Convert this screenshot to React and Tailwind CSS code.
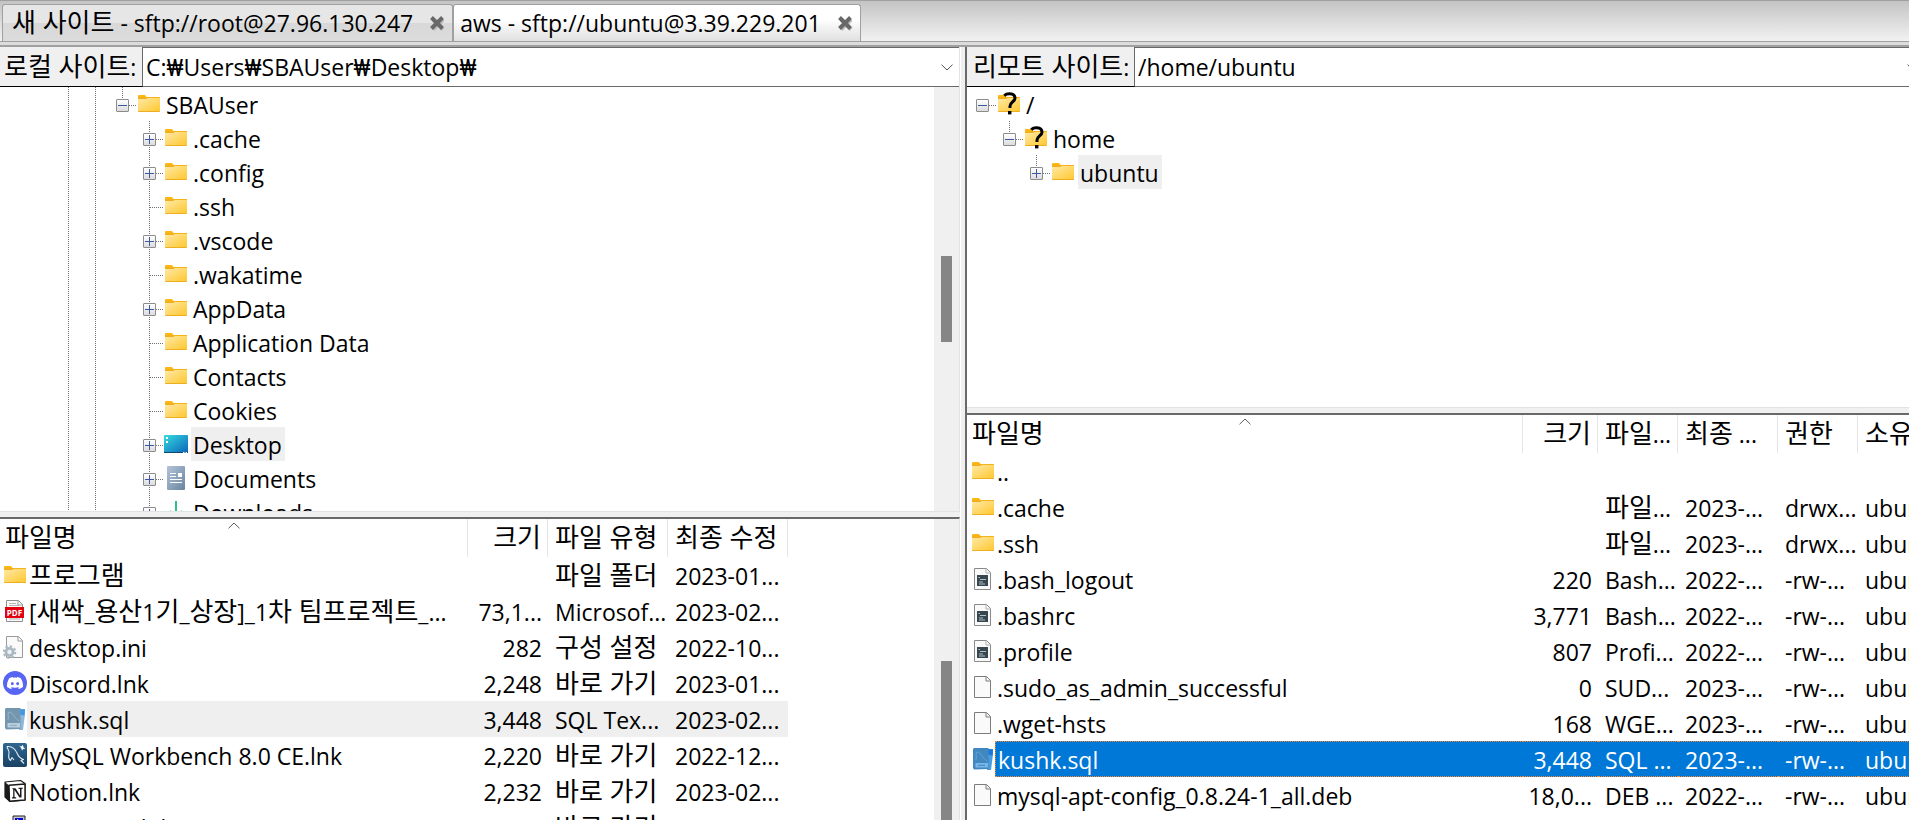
import { Fragment } from "react";
import { SiDiscord } from "react-icons/si";

const HANGUL = /([\uac00-\ud7a3]+(?: [\uac00-\ud7a3]+)*)/;

/* Hangul runs are set slightly larger than the Latin text beside them. */
function Txt({ children }) {
  return String(children)
    .split(HANGUL)
    .map((part, i) =>
      i % 2 ? (
        <span key={i} className="text-[26px] leading-none">
          {part}
        </span>
      ) : (
        <Fragment key={i}>{part}</Fragment>
      )
    );
}

function Svg({ children }) {
  return (
    <svg viewBox="0 0 24 24" className="size-6 shrink-0" aria-hidden="true">
      {children}
    </svg>
  );
}

const FolderShape = () => (
  <>
    <path d="M1 4a1 1 0 0 1 1-1h6l1.500 2H23v3H1z" fill="#fdb713" />
    <rect x="1" y="5.500" width="22" height="14.500" rx="0.800" fill="#eeae22" />
    <path d="M1 7h8l2-1h12v13H1z" fill="url(#folder)" />
  </>
);

const Folder = () => (
  <Svg>
    <FolderShape />
  </Svg>
);

const UnknownFolder = () => (
  <span className="relative block size-6">
    <Folder />
    <svg viewBox="0 0 24 24" className="absolute inset-0 size-6" aria-hidden="true">
      <path d="M7.200 3.600C9 2 11 1.700 13 1.800C16 2 18 3.500 18 6.300C18 9.500 13 10.500 13 14V16" fill="none" stroke="#000" strokeWidth="3" />
      <rect x="11" y="19" width="3.400" height="3.400" fill="#000" />
    </svg>
  </span>
);

const DesktopIcon = () => (
  <Svg>
    <rect x="0" y="3" width="24" height="18" rx="0.800" fill="url(#desk)" />
    <rect x="0" y="20" width="24" height="1" fill="#11466f" />
    <rect x="2" y="5" width="2" height="2" fill="#fff" />
    <rect x="2" y="9" width="2" height="2" fill="#fff" />
    <path d="M19 20.500h1.500M21.500 20.500h1.500" stroke="#fff" />
  </Svg>
);

const DocumentsIcon = () => (
  <Svg>
    <rect x="3" y="0" width="18" height="24" rx="1" fill="url(#docs)" />
    <path d="M6 7.500h6M6 10.500h6M6 13.500h12M6 16.500h12" stroke="#fff" strokeWidth="1.200" />
    <rect x="14" y="7" width="4" height="4" fill="#fff" />
  </Svg>
);

const DownloadsIcon = () => (
  <Svg>
    <path d="M12 1v15M6 11l6 6 6-6M4 22h16" fill="none" stroke="#2cc08d" strokeWidth="2" />
  </Svg>
);

const FileIcon = () => (
  <Svg>
    <path d="M3.500 1.500h12l4 4v17h-16z" fill="#fafafa" stroke="#7d7d7d" />
    <path d="M15 1.500V6h4.500" fill="none" stroke="#7d7d7d" />
  </Svg>
);

const ShellIcon = () => (
  <Svg>
    <path d="M3.500 1.500h12l4 4v17h-16z" fill="#fafafa" stroke="#8a8a8a" />
    <path d="M15 1.500V6h4.500" fill="none" stroke="#b0b0b0" />
    <rect x="6" y="8" width="11" height="11" fill="#37474f" />
    <path d="M7.500 10.500h1.500M9 12.500h6M8 15h4M8 17h6" stroke="#b4bec4" />
  </Svg>
);

const PdfIcon = () => (
  <Svg>
    <path d="M3.500 1.500h12l4 4v17h-16z" fill="#fafafa" stroke="#8f8f8f" />
    <path d="M6 4.500h7M6 6.500h10M6 20h11" stroke="#b5b5b5" />
    <path d="M15 1.500V6h4.500" fill="none" stroke="#a0a0a0" />
    <rect x="2" y="8" width="19" height="11" fill="#e3000f" />
    <text x="11.500" y="16.500" textAnchor="middle" fontSize="8" fontWeight="700" fill="#fff" fontFamily="Open Sans, sans-serif">
      PDF
    </text>
  </Svg>
);

const IniIcon = () => (
  <Svg>
    <path d="M3.500 1.500h12l4 4v17h-16z" fill="#fafafa" stroke="#9a9a9a" />
    <path d="M15 1.500V6h4.500" fill="none" stroke="#9a9a9a" />
    <circle cx="6.500" cy="17" r="5.800" fill="none" stroke="#a9b7c0" strokeWidth="2" strokeDasharray="2.300 2.200" />
    <circle cx="6.500" cy="17" r="3.700" fill="#dce4e8" stroke="#a9b7c0" strokeWidth="2.600" />
    <circle cx="6.500" cy="17" r="1.700" fill="#eef2f4" />
  </Svg>
);

const DiscordIcon = () => (
  <span className="flex size-6 items-center justify-center rounded-full bg-[#5865f2] text-white">
    <SiDiscord className="size-4" aria-hidden="true" />
  </span>
);

const Dolphin = ({ stroke }) => (
  <path
    d="M4 3.500C9 3 12.500 6 14.500 11C15.500 14 18 15.500 20.500 16.500L18 17.500L21 20.500M4 3.500C4 6 6.500 7 6 10C5.500 12.500 5.500 16 7.500 17.500L9 14.500L11 17"
    fill="none"
    stroke={stroke}
    strokeWidth="1.100"
    strokeLinejoin="round"
  />
);

const SqlIcon = ({ selected }) => (
  <Svg>
    <path d="M17 2h5v5l-2 16h-4z" fill={selected ? "#4b9be0" : "#8fb8d8"} />
    <path d="M16 2l6 0.500-0.500 6-5-1z" fill={selected ? "#1a78dc" : "#3f97ea"} />
    <path d="M3 1h14.500v21L3 22.500 2 21V2z" fill={selected ? "#4288c0" : "#7496ae"} />
    <path d="M5 13c1-4-1-7 1-8 4 0 5 6 10 9" fill="none" stroke={selected ? "#69a6d6" : "#9db8ca"} strokeWidth="0.900" />
    <rect x="4.500" y="16" width="12.500" height="4.500" fill={selected ? "#78b6e8" : "#b7cfdf"} />
    <path d="M7 18.300h7" stroke={selected ? "#4288c0" : "#8ea9bb"} />
  </Svg>
);

const WorkbenchIcon = () => (
  <Svg>
    <rect width="24" height="24" rx="2" fill="url(#wb)" />
    <Dolphin stroke="#dfeaf2" />
    <path d="M16 2.500l2 1 2-1.500 0.500 2.500 2 1-2.300 0.500-1.200 1.500-0.800-2.500z" fill="#fff" />
  </Svg>
);

const NotionIcon = () => (
  <Svg>
    <path d="M2 3L17.500 1.500 22 4.500V21L7 22.500 2 18z" fill="#fff" stroke="#1a1a1a" strokeWidth="1.200" strokeLinejoin="round" />
    <path d="M2 3L6 6.500V22L2 18z" fill="#1a1a1a" />
    <path d="M6 6.300L22 5v16L6.500 22.200z" fill="#fff" stroke="#1a1a1a" strokeWidth="1.400" strokeLinejoin="round" />
    <path d="M9 9.200h3.500l4.500 7V10l-1.500-0.300V8.700h4.200v1l-1.200 0.400V18.500h-2l-5-7.500v7l1.700 0.400v1H9v-1l1.200-0.400V10.500z" fill="#1a1a1a" />
  </Svg>
);

const PuttyIcon = () => (
  <Svg>
    <path d="M10 1h12v11H10z" fill="#c8c8c8" stroke="#222" />
    <rect x="12" y="3" width="8" height="7" fill="#0000e0" />
    <path d="M15 4l-3 5h3l-3 5" fill="none" stroke="#ff0" />
    <path d="M2 12h12v8H2z" fill="#c8c8c8" stroke="#222" />
  </Svg>
);

const ICONS = {
  folder: Folder,
  unknown: UnknownFolder,
  desktop: DesktopIcon,
  documents: DocumentsIcon,
  downloads: DownloadsIcon,
  file: FileIcon,
  shell: ShellIcon,
  pdf: PdfIcon,
  ini: IniIcon,
  discord: DiscordIcon,
  sql: SqlIcon,
  workbench: WorkbenchIcon,
  notion: NotionIcon,
  putty: PuttyIcon,
};

function Defs() {
  return (
    <svg className="absolute size-0" aria-hidden="true">
      <defs>
        <linearGradient id="folder" x1="0" y1="0" x2="1" y2="1">
          <stop offset="0" stopColor="#ffe9a6" />
          <stop offset="1" stopColor="#ffc831" />
        </linearGradient>
        <linearGradient id="desk" x1="0" y1="0" x2="1" y2="1">
          <stop offset="0" stopColor="#36dbe2" />
          <stop offset="1" stopColor="#0a63b8" />
        </linearGradient>
        <linearGradient id="docs" x1="0" y1="0" x2="1" y2="1">
          <stop offset="0" stopColor="#b3c4d8" />
          <stop offset="1" stopColor="#6a84a0" />
        </linearGradient>
        <linearGradient id="wb" x1="0" y1="0" x2="0" y2="1">
          <stop offset="0" stopColor="#2f6690" />
          <stop offset="1" stopColor="#1a4263" />
        </linearGradient>
      </defs>
    </svg>
  );
}

const V_DOTS = "w-px bg-[repeating-linear-gradient(to_bottom,#707070_0_1px,transparent_1px_2px)]";
const H_DOTS = "h-px bg-[repeating-linear-gradient(to_right,#707070_0_1px,transparent_1px_2px)]";

/* One indent column of the tree: the guide line, and the expander if this row has one. */
function Guide({ up = true, down = true, kind }) {
  return (
    <span className="grid h-[34px] w-[27px] shrink-0 grid-cols-[13px_1px_13px] grid-rows-[18px_16px]">
      <span className={`col-start-2 row-start-1 ${up ? V_DOTS : ""}`} />
      <span className={`col-start-2 row-start-2 ${down ? V_DOTS : ""}`} />
      {kind && <span className={`col-start-3 row-start-2 ${H_DOTS}`} />}
      {(kind === "plus" || kind === "minus") && (
        <button
          type="button"
          aria-label={kind === "plus" ? "펼치기" : "접기"}
          className="z-10 col-span-3 col-start-1 row-span-2 row-start-1 mt-3 size-[13px] justify-self-center rounded-[1px] border border-[#8c8c8c] bg-linear-to-b from-white to-[#dcdcdc]"
        >
          <svg viewBox="0 0 11 11" className="block size-[11px]" aria-hidden="true">
            <path d={kind === "plus" ? "M1 5.500h9M5.500 1v9" : "M1 5.500h9"} stroke="#3f56a0" />
          </svg>
        </button>
      )}
    </span>
  );
}

function TreeRow({ guides, icon, label, selected }) {
  const Icon = ICONS[icon];
  return (
    <li className="flex h-[34px]" role="treeitem" aria-selected={!!selected}>
      {guides.map((g, i) => (
        <Guide key={i} {...g} />
      ))}
      <span className="w-7 shrink-0 pt-[5px] pl-px">
        <Icon />
      </span>
      <span className={`pt-px pr-[3px] pl-[2px] leading-[34px] whitespace-nowrap ${selected ? "bg-[#efefef]" : ""}`}>{label}</span>
    </li>
  );
}

const LINE = {};
const NONE = { up: false, down: false };
const child = (icon, label, kind, selected) => ({
  icon,
  label,
  selected,
  guides: [LINE, LINE, NONE, { kind }],
});

const LOCAL_TREE = [
  { icon: "folder", label: "SBAUser", guides: [LINE, LINE, { kind: "minus", down: false }] },
  child("folder", ".cache", "plus"),
  child("folder", ".config", "plus"),
  child("folder", ".ssh", "leaf"),
  child("folder", ".vscode", "plus"),
  child("folder", ".wakatime", "leaf"),
  child("folder", "AppData", "plus"),
  child("folder", "Application Data", "leaf"),
  child("folder", "Contacts", "leaf"),
  child("folder", "Cookies", "leaf"),
  child("desktop", "Desktop", "plus", true),
  child("documents", "Documents", "plus"),
  child("downloads", "Downloads", "plus"),
];

const REMOTE_TREE = [
  { icon: "unknown", label: "/", guides: [{ kind: "minus", up: false, down: false }] },
  { icon: "unknown", label: "home", guides: [NONE, { kind: "minus", down: false }] },
  { icon: "folder", label: "ubuntu", selected: true, guides: [NONE, NONE, { kind: "plus", down: false }] },
];

const LOCAL_FILES = [
  ["folder", "프로그램", "", "파일 폴더", "2023-01..."],
  ["pdf", "[새싹_용산1기_상장]_1차 팀프로젝트_...", "73,1...", "Microsof...", "2023-02..."],
  ["ini", "desktop.ini", "282", "구성 설정", "2022-10..."],
  ["discord", "Discord.lnk", "2,248", "바로 가기", "2023-01..."],
  ["sql", "kushk.sql", "3,448", "SQL Tex...", "2023-02...", "gray"],
  ["workbench", "MySQL Workbench 8.0 CE.lnk", "2,220", "바로 가기", "2022-12..."],
  ["notion", "Notion.lnk", "2,232", "바로 가기", "2023-02..."],
  ["putty", "PuTTYgen.lnk", "1,168", "바로 가기", "2023-02..."],
];

const REMOTE_FILES = [
  ["folder", "..", "", "", "", "", ""],
  ["folder", ".cache", "", "파일...", "2023-...", "drwx...", "ubuntu"],
  ["folder", ".ssh", "", "파일...", "2023-...", "drwx...", "ubuntu"],
  ["shell", ".bash_logout", "220", "Bash...", "2022-...", "-rw-...", "ubuntu"],
  ["shell", ".bashrc", "3,771", "Bash...", "2022-...", "-rw-...", "ubuntu"],
  ["shell", ".profile", "807", "Profi...", "2022-...", "-rw-...", "ubuntu"],
  ["file", ".sudo_as_admin_successful", "0", "SUD...", "2023-...", "-rw-...", "ubuntu"],
  ["file", ".wget-hsts", "168", "WGE...", "2023-...", "-rw-...", "ubuntu"],
  ["sql", "kushk.sql", "3,448", "SQL ...", "2023-...", "-rw-...", "ubuntu", "blue"],
  ["file", "mysql-apt-config_0.8.24-1_all.deb", "18,0...", "DEB ...", "2022-...", "-rw-...", "ubuntu"],
];

const TONES = {
  gray: { cell: "bg-[#efefef]", name: "bg-[#efefef]" },
  blue: {
    cell: "bg-[#0078d7] text-white border-y border-dotted border-[#ff8728]",
    name: "bg-[#0078d7] text-white border-y border-l border-dotted border-[#ff8728]",
  },
};

function FileTable({ label, headers, widths, rows, iconPad, tableClass }) {
  return (
    <table aria-label={label} className={`table-fixed border-separate border-spacing-0 whitespace-nowrap ${tableClass}`}>
      <colgroup>
        {widths.map((w, i) => (
          <col key={i} className={w} />
        ))}
      </colgroup>
      <thead>
        <tr className="h-[38px]">
          {headers.map((h, i) => (
            <th
              key={h}
              scope="col"
              className={`relative overflow-hidden border-r border-[#e5e5e5] p-0 font-normal ${
                i === 0 ? "pl-[5px] text-left" : i === 1 ? "pr-[6px] text-right" : "pl-[7px] text-left"
              }`}
            >
              <Txt>{h}</Txt>
              {i === 0 && (
                <svg viewBox="0 0 12 7" className="absolute top-[3px] left-1/2 h-[7px] w-3 -translate-x-1/2" aria-hidden="true">
                  <path d="M0.500 6.300L6 1l5.500 5.300" fill="none" stroke="#606060" />
                </svg>
              )}
            </th>
          ))}
        </tr>
      </thead>
      <tbody>
        {rows.map((row, r) => {
          const [icon, name, ...rest] = row;
          const Icon = ICONS[icon];
          const cells = rest.slice(0, headers.length - 1);
          const tone = TONES[rest[headers.length - 1]];
          return (
            <tr key={r} className="h-9">
              <td className="p-0">
                <div className={`flex h-9 ${iconPad}`}>
                  <span className="w-6 shrink-0 pt-[6px]">
                    {icon === "sql" ? <SqlIcon selected={rest[headers.length - 1] === "blue"} /> : <Icon />}
                  </span>
                  <span className={`flex grow items-center overflow-hidden pt-px pl-[2px] ${tone ? tone.name : ""}`}>
                    <span className="whitespace-pre">
                      <Txt>{name}</Txt>
                    </span>
                  </span>
                </div>
              </td>
              {cells.map((c, i) => (
                <td
                  key={i}
                  className={`overflow-hidden p-0 pt-px leading-[30px] ${i === 0 ? "pr-[6px] text-right" : "pl-[7px]"} ${tone ? tone.cell : ""}`}
                >
                  <Txt>{c}</Txt>
                </td>
              ))}
            </tr>
          );
        })}
      </tbody>
    </table>
  );
}

function AddressBar({ id, label, path, labelClass, className = "" }) {
  return (
    <div className={`flex h-10 shrink-0 ${className}`}>
      <label
        htmlFor={id}
        className={`flex shrink-0 items-center border-r border-b border-r-[#696969] border-b-black bg-[#f0f0f0] whitespace-nowrap ${labelClass}`}
      >
        <span>
          <Txt>{label}</Txt>
        </span>
      </label>
      <div className="relative min-w-0 grow border-t border-b border-[#696969] bg-white">
        <select
          id={id}
          className="size-full appearance-none bg-transparent pr-8 pl-[3px] font-['Open_Sans','Roboto',sans-serif] outline-none"
        >
          <option>{path}</option>
        </select>
        <svg viewBox="0 0 12 7" className="pointer-events-none absolute top-4 right-[6px] h-[7px] w-3" aria-hidden="true">
          <path d="M0.500 0.700L6 6l5.500-5.300" fill="none" stroke="#505050" />
        </svg>
      </div>
    </div>
  );
}

function Scrollbar({ children }) {
  return <div className="flex w-[25px] shrink-0 flex-col items-center bg-[#f0f0f0]">{children}</div>;
}

function Tab({ children, active }) {
  return (
    <div
      className={`flex h-full items-center rounded-t-[3px] border border-b-0 border-[#a0a0a0] whitespace-nowrap ${
        active
          ? "bg-linear-to-b from-white from-40% to-[#e0e0e0] pr-[7px] pl-[6px]"
          : "border-b bg-[linear-gradient(to_bottom,#e6e6e6_0,#e6e6e6_50%,#d8d8d8_50%,#dcdcdc_100%)] pr-[7px] pl-[9px]"
      }`}
    >
      <button type="button" role="tab" aria-selected={!!active}>
        <Txt>{children}</Txt>
      </button>
      <button type="button" aria-label="탭 닫기" className="pl-4">
        <svg viewBox="0 0 16 16" className="size-4" aria-hidden="true">
          <path d="M3 3.500l10 10M13 3.500l-10 10" stroke="#bdbdbd" strokeWidth="4" transform="translate(1 1)" />
          <path d="M2.500 2.500l11 11M13.500 2.500l-11 11" stroke="#686868" strokeWidth="4" />
        </svg>
      </button>
    </div>
  );
}

export default function App() {
  return (
    <div className="flex h-screen flex-col overflow-hidden bg-[#f0f0f0] font-['Open_Sans','Noto_Sans_CJK_KR',sans-serif] text-[23px] leading-[30px] text-black">
      <Defs />
      <header className="shrink-0 border-t border-[#a0a0a0]">
        <div
          role="tablist"
          className="flex h-[41px] border-b border-[#a0a0a0] bg-linear-to-b from-[#c4c4c4] to-[#f2f2f2] pt-[3px] pl-[2px]"
        >
          <Tab>새 사이트 - sftp://root@27.96.130.247</Tab>
          <Tab active>aws - sftp://ubuntu@3.39.229.201</Tab>
        </div>
        <div className="h-[5px] border-b-2 border-[#a0a0a0] bg-[#dcdcdc]" />
      </header>

      <main className="grid min-h-0 flex-1 grid-cols-[961fr_944fr] gap-x-1">
        <section className="grid min-h-0 min-w-0 grid-rows-[465fr_303fr] gap-y-[5px] border-r border-white">
          <div className="flex min-h-0 min-w-0 flex-col border-r border-b border-[#e3e3e3] bg-white">
            <AddressBar id="local" label="로컬 사이트:" path="C:₩Users₩SBAUser₩Desktop₩" labelClass="w-[143px] pl-1" />
            <div className="flex min-h-0 flex-1">
              <ul role="tree" aria-label="로컬 사이트" className="min-w-0 grow overflow-hidden pl-[55px]">
                {LOCAL_TREE.map((n) => (
                  <TreeRow key={n.label} {...n} />
                ))}
              </ul>
              <Scrollbar>
                <div className="flex-[169]" />
                <div className="w-[11px] flex-[86] bg-[#868686]" />
                <div className="flex-[169]" />
              </Scrollbar>
            </div>
          </div>
          <div className="flex min-h-0 min-w-0 border-t-2 border-r border-t-[#696969] border-r-[#e3e3e3] bg-white">
            <div className="min-w-0 grow overflow-hidden">
              <FileTable
                label="로컬 파일"
                headers={["파일명", "크기", "파일 유형", "최종 수정"]}
                widths={["w-[468px]", "w-[80px]", "w-[120px]", "w-[120px]"]}
                rows={LOCAL_FILES}
                iconPad="pl-[3px]"
                tableClass="w-[788px]"
              />
            </div>
            <Scrollbar>
              <div className="flex-[142]" />
              <div className="w-[11px] flex-[159] bg-[#868686]" />
            </Scrollbar>
          </div>
        </section>

        <section className="grid min-h-0 min-w-0 grid-rows-[361fr_407fr] gap-y-[5px] overflow-hidden border-l-2 border-[#696969]">
          <div className="flex min-h-0 min-w-0 flex-col border-b border-[#e3e3e3] bg-white">
            <AddressBar id="remote" label="리모트 사이트:" path="/home/ubuntu" labelClass="w-[168px] pl-[6px]" className="-mr-4" />
            <ul role="tree" aria-label="리모트 사이트" className="min-h-0 grow overflow-hidden pl-[2px]">
              {REMOTE_TREE.map((n) => (
                <TreeRow key={n.label} {...n} />
              ))}
            </ul>
          </div>
          <div className="min-h-0 min-w-0 overflow-hidden border-t-2 border-[#696969] bg-white">
            <FileTable
              label="리모트 파일"
              headers={["파일명", "크기", "파일...", "최종 ...", "권한", "소유자"]}
              widths={["w-[556px]", "w-[75px]", "w-[80px]", "w-[100px]", "w-[80px]", "w-[100px]"]}
              rows={REMOTE_FILES}
              iconPad="pl-1"
              tableClass="w-[991px]"
            />
          </div>
        </section>
      </main>
    </div>
  );
}
